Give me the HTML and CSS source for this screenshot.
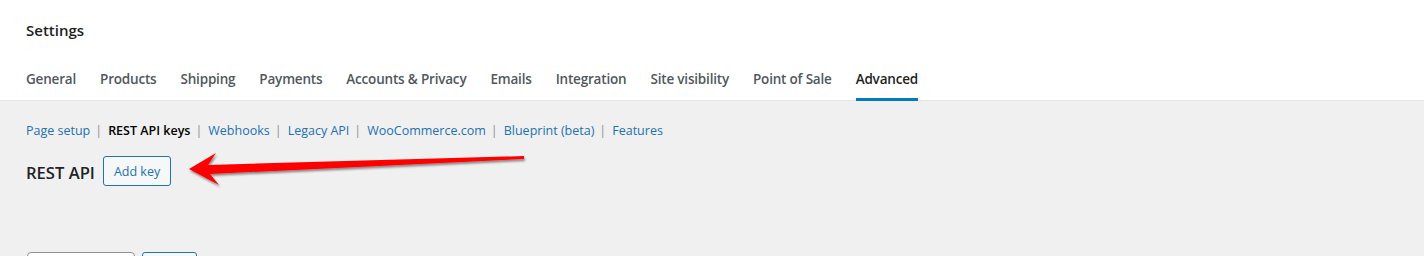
FILE: index.html
```html
<!DOCTYPE html>
<html>
<head>
<meta charset="utf-8">
<link rel="stylesheet" href="styles.css">
</head>
<body>
<header class="top">
  <h1 class="title">Settings</h1>
  <nav class="tabs">
    <a class="tab">General</a>
    <a class="tab">Products</a>
    <a class="tab">Shipping</a>
    <a class="tab">Payments</a>
    <a class="tab">Accounts &amp; Privacy</a>
    <a class="tab">Emails</a>
    <a class="tab">Integration</a>
    <a class="tab">Site visibility</a>
    <a class="tab">Point of Sale</a>
    <a class="tab active">Advanced</a>
  </nav>
</header>
<main class="content">
  <ul class="subnav">
    <li><a class="link">Page setup</a><span class="sep">|</span></li>
    <li><a class="link current">REST API keys</a><span class="sep">|</span></li>
    <li><a class="link">Webhooks</a><span class="sep">|</span></li>
    <li><a class="link">Legacy API</a><span class="sep">|</span></li>
    <li><a class="link">WooCommerce.com</a><span class="sep">|</span></li>
    <li><a class="link">Blueprint (beta)</a><span class="sep">|</span></li>
    <li><a class="link">Features</a></li>
  </ul>
  <div class="heading-row">
    <h2 class="heading">REST API</h2>
    <button class="btn">Add key</button>
  </div>
  <div class="actions">
    <div class="select"></div>
    <div class="btn-small"></div>
  </div>
  <svg class="arrow" width="360" height="40" viewBox="0 0 360 40">
    <defs>
      <filter id="sh" x="-10%" y="-50%" width="120%" height="200%">
        <feDropShadow dx="1" dy="2" stdDeviation="1.2" flood-color="#000" flood-opacity="0.45"/>
      </filter>
    </defs>
    <path d="M3 18 L30 2 L22 14 L338 5 L338 8 L24 23 L33 34 Z" fill="#ff0000" filter="url(#sh)"/>
  </svg>
</main>
</body>
</html>
```
FILE: styles.css
```css
html, body {
  margin: 0;
  padding: 0;
}
body {
  background: #f0f0f0;
  font-family: "Open Sans", "Noto Sans", sans-serif;
  color: #1d2327;
  width: 1424px;
  height: 256px;
  overflow: hidden;
}
.top {
  background: #fff;
  border-bottom: 1px solid #e6e6e6;
  padding: 0 0 0 26px;
  height: 100px;
  box-sizing: content-box;
  display: flex;
  flex-direction: column;
}
.title {
  margin: 0;
  padding-top: 19px;
  font-size: 15px;
  font-weight: 600;
  line-height: 22px;
  color: #1e1e1e;
}
.tabs {
  display: flex;
  gap: 24px;
  margin-top: 26px;
}
.tab {
  font-size: 13.5px;
  font-weight: 600;
  color: #50575e;
  line-height: 20px;
  padding: 2px 0 9px;
  border-bottom: 3px solid transparent;
  letter-spacing: -0.19px;
  white-space: nowrap;
}
.tab.active {
  color: #1e1e1e;
  border-bottom-color: #007cba;
}
.content {
  position: relative;
  padding: 0 26px;
}
.subnav {
  list-style: none;
  margin: 0;
  padding: 20px 0 0;
  display: flex;
  font-size: 12.5px;
  line-height: 20px;
}
.subnav li {
  white-space: nowrap;
}
.link {
  color: #2271b1;
}
.link.current {
  color: #000;
  font-weight: 600;
}
.sep {
  color: #8c8f94;
  padding: 0 6px 0 5px;
}
.heading-row {
  display: flex;
  align-items: center;
  gap: 8px;
  margin-top: 15px;
}
.heading {
  margin: 0;
  padding-top: 3px;
  font-size: 16.6px;
  font-weight: 600;
  color: #1d2327;
}
.btn {
  font-family: inherit;
  font-size: 12.5px;
  color: #2271b1;
  background: #f6f7f7;
  border: 1px solid #2271b1;
  border-radius: 3px;
  height: 30px;
  padding: 0 10px;
  cursor: pointer;
}
.actions {
  display: flex;
  gap: 7px;
  margin-top: 66px;
  padding-left: 1px;
}
.select {
  width: 106px;
  height: 30px;
  border: 1px solid #8c8f94;
  border-radius: 4px;
  background: #fff;
}
.btn-small {
  width: 53px;
  height: 30px;
  border: 1px solid #2271b1;
  border-radius: 3px;
  background: #f6f7f7;
}
.arrow {
  position: absolute;
  left: 186px;
  top: 50px;
}
```
